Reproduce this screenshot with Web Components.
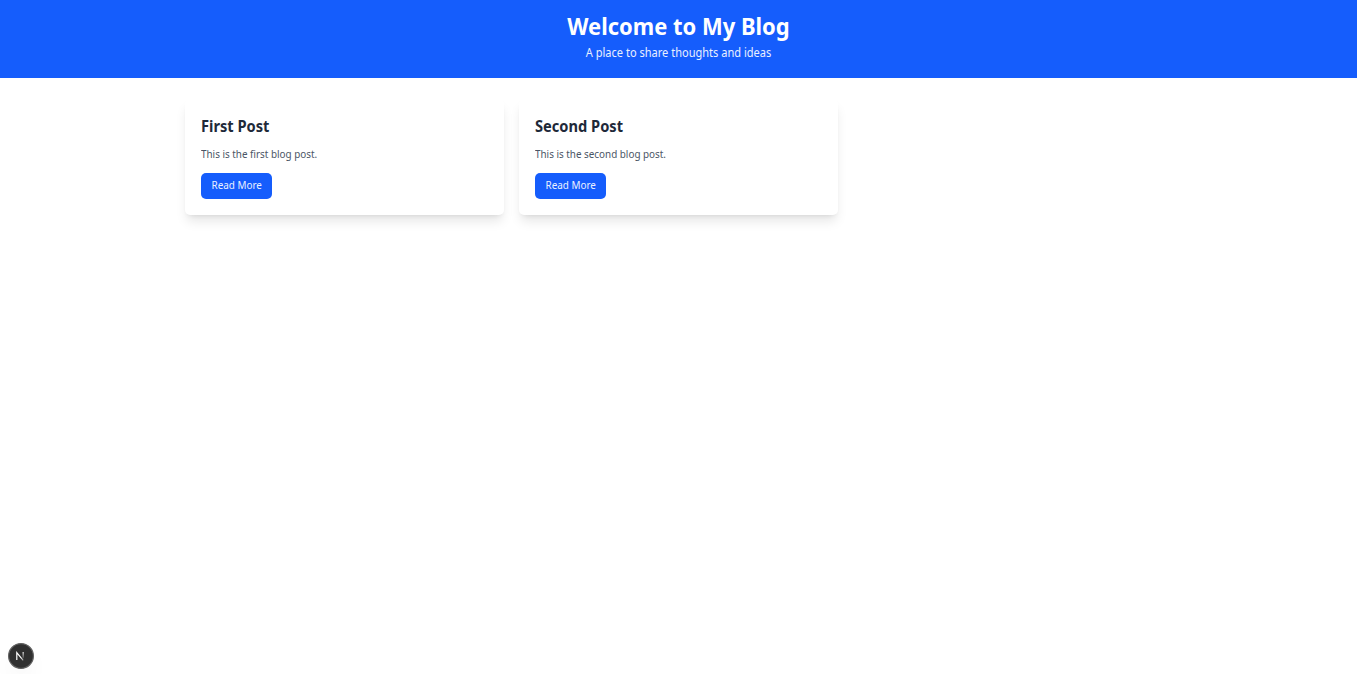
<!DOCTYPE html>
<html lang="en"><head><meta charset="utf-8"><title>My Blog</title>
<style>
body{margin:0;background:#fff;font-family:"Noto Sans",sans-serif;min-height:674px}
</style></head><body>
<blog-header><span slot="title">Welcome to My Blog</span><span slot="sub">A place to share thoughts and ideas</span></blog-header>
<post-grid>
<post-card><span slot="title">First Post</span><span slot="text">This is the first blog post.</span></post-card>
<post-card><span slot="title">Second Post</span><span slot="text">This is the second blog post.</span></post-card>
</post-grid>
<dev-badge></dev-badge>
<script>
const define=(name,html)=>customElements.define(name,class extends HTMLElement{
constructor(){super();this.attachShadow({mode:'open'}).innerHTML=html;}});
define('blog-header',`<style>
:host{display:block;background:#155dfc;color:#fff;text-align:center;height:78px;box-sizing:border-box;padding-top:12px}
h1{margin:0;font-size:24px;line-height:28px;font-weight:700;transform:scaleX(.915)}
p{margin:4px 0 0;font-size:12px;line-height:18px;transform:scaleX(.92);color:#e9f0ff}
</style><h1><slot name="title"></slot></h1><p><slot name="sub"></slot></p>`);
define('post-grid',`<style>
:host{display:grid;grid-template-columns:repeat(3,319px);gap:15px;width:987px;margin:21px auto 0}
</style><slot></slot>`);
define('post-card',`<style>
:host{display:block;background:#fff;border-radius:5px;height:116px;box-sizing:border-box;padding:16px;box-shadow:0 8px 12px -2.5px rgba(0,0,0,.1),0 3px 5px -3px rgba(0,0,0,.1)}
h2{margin:0;font-size:15.5px;line-height:22px;font-weight:700;color:#1e2939;transform:scaleX(.945);transform-origin:0 0}
p{margin:9px 0 10px;font-size:10.5px;line-height:17px;color:#4a5565;transform:scaleX(.94);transform-origin:0 0}
button{display:block;border:0;border-radius:5px;background:#155dfc;color:#e9f0ff;font:10.5px/16px "Noto Sans",sans-serif;width:71px;height:26px;padding:0 0 2px}
button span{display:inline-block;transform:scaleX(.94)}
</style><h2><slot name="title"></slot></h2><p><slot name="text"></slot></p><button><span>Read More</span></button>`);
define('dev-badge',`<style>
:host{position:fixed;left:8px;bottom:5px;width:26px;height:26px;border-radius:50%;box-shadow:0 11px 22px -5px rgba(0,0,0,.08)}svg{display:block}
</style><svg width="26" height="26" viewBox="0 0 26 26"><defs><linearGradient id="a" gradientUnits="userSpaceOnUse" x1="9" y1="9" x2="16" y2="18"><stop offset=".6" stop-color="#fff"/><stop offset="1" stop-color="#fff" stop-opacity=".3"/></linearGradient><linearGradient id="b" x1="0" y1="0" x2="0" y2="1"><stop stop-color="#fff"/><stop offset="1" stop-color="#fff" stop-opacity=".2"/></linearGradient></defs><circle cx="13" cy="13" r="12.4" fill="#303030" stroke="#616161" stroke-width="1.2"/><path d="M8.8 17V9.6L15.2 17.4" fill="none" stroke="url(#a)" stroke-width="1.2"/><path d="M14.6 9h1.1v6.3h-1.1z" fill="url(#b)"/></svg>`);
</script></body></html>
